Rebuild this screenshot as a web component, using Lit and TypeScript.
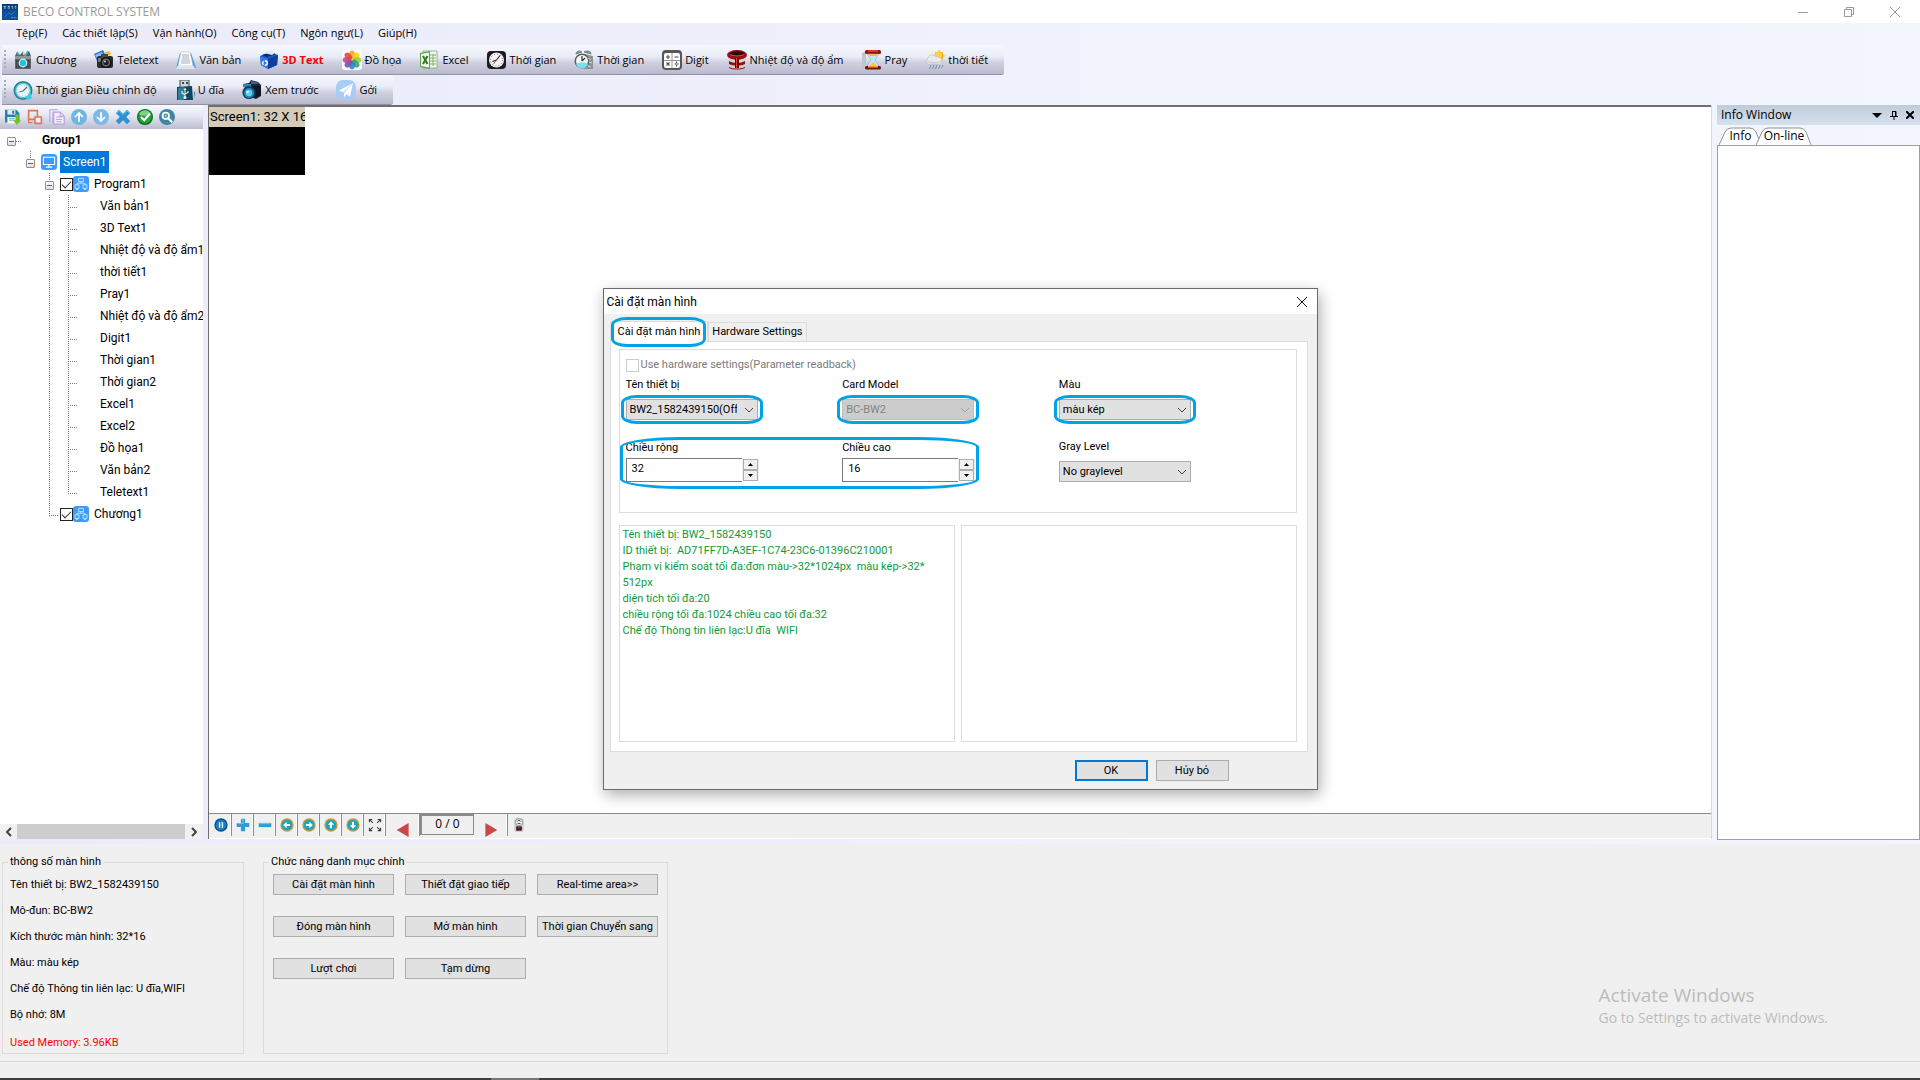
import { LitElement, html, css, svg, nothing, TemplateResult } from "lit";
import { customElement } from "lit/decorators.js";
import { classMap } from "lit/directives/class-map.js";

type Icon = TemplateResult;

const icon = (size: number, body: unknown): Icon =>
  html`<svg width=${size} height=${size} viewBox="0 0 20 20" aria-hidden="true">${body}</svg>`;

const petals = ["#f5a623", "#f8d21c", "#9ccc3c", "#2fa866", "#2f86c9", "#6a55b5", "#b7479a", "#e8453c"];

const art = {
  app: svg`<rect width="20" height="20" fill="#0a4f9c"/><rect width="20" height="7" fill="#073a78"/><path d="M2 3h3M2 5h3M7 3h3M7 5h3M12 3h2M12 5h2M16 3h2M16 5h2" stroke="#dce9f7" stroke-width="1"/><path d="M3 17l5-6 4 2 5-4" stroke="#2f86d6" fill="none"/><path d="M11 17h7" stroke="#b6d3ee" stroke-dasharray="1 1"/>`,
  program: svg`<path d="M2 6l2-4 3 3 3-4 2 4 4-4 2 5z" fill="#58626c"/><path d="M4 2l2 3M15 1l-3 5" stroke="#3bb6d8" stroke-width="1.6"/><path d="M10 1l1 4" stroke="#e8d9a6" stroke-width="1.6"/><rect x="2" y="6" width="16" height="13" rx="1" fill="#5f6468"/><rect x="2" y="6" width="16" height="3" fill="#90979c"/><rect x="3" y="10" width="14" height="8" fill="#494e52"/><circle cx="10" cy="13" r="4.4" fill="#d8eff4"/><circle cx="10" cy="13" r="3.2" fill="#22c4dd"/>`,
  camera: svg`<path d="M0 4l9-4 3 6-9 5z" fill="#2a6fd0"/><path d="M1 5l7-3 1 3-6 3z" fill="#8cc0f5"/><path d="M11 2l5-1 1 4-5 1z" fill="#efc23a"/><rect x="3" y="6" width="16" height="12" rx="2" fill="#2b2b2d"/><rect x="7" y="4" width="7" height="4" fill="#46474b"/><rect x="4" y="8" width="3" height="4" fill="#77797f"/><circle cx="12" cy="12.500" r="5.500" fill="#111"/><circle cx="12" cy="12.500" r="4" fill="#6a6d74"/><circle cx="12" cy="12.500" r="2.600" fill="#1c1d20"/><circle cx="11" cy="11.500" r="1" fill="#c8d0da"/>`,
  text: svg`<path d="M4 3h11l5 15H0z" fill="#3f9de0"/><path d="M5 2h9l3 14H2z" fill="#fdfdfd" stroke="#b8c3cf" stroke-width=".6"/><path d="M6 5h7M6 7h7M5.500 9h8M5 11h9M5 13h9" stroke="#9aa6b4" stroke-width=".9"/><path d="M1 16h17l1 3H0z" fill="#dfe5ec"/>`,
  box3d: svg`<path d="M1 6l10-4 8 3-1 10-9 4-7-4z" fill="#1857c2"/><path d="M1 6l8 3v10l-7-4z" fill="#2d7be6"/><path d="M9 9l10-4-1 10-9 4z" fill="#0f3f9e"/><path d="M3 5l9-3 5 2-9 3z" fill="#0a2a6e"/><path d="M5 3l6-3 5 3-3 2-4-1z" fill="#dfe9f6"/><circle cx="6" cy="13" r="2.300" fill="none" stroke="#fff" stroke-width="1.400" stroke-dasharray="3.500 1.300"/>`,
  flower: svg`<rect width="20" height="20" rx="3" fill="#fafafa"/>${petals.map(
    (c, i) => svg`<ellipse cx="10" cy="5" rx="3" ry="4.400" fill=${c} fill-opacity=".9" transform="rotate(${i * 45} 10 10)"/>`
  )}`,
  excel: svg`<path d="M4 1h14v17H4z" fill="#f4f8f2" stroke="#7da67b" stroke-width=".8"/><path d="M11 5h6M11 8h6M11 11h6M11 14h6M14 4v12" stroke="#7fb36f" stroke-width="1"/><path d="M1 3l10-2v18L1 17z" fill="#5aa63f"/><path d="M2 4l8-1.500v15L2 16z" fill="#f1f8ee"/><path d="M4 6l4.500 8M8.500 6L4 14" stroke="#2c7c2b" stroke-width="2"/>`,
  clockDark: svg`<rect x="0" y="1" width="19" height="18" rx="4" fill="#1c1c1e"/><circle cx="9.500" cy="10" r="7.500" fill="#f6f6f6"/><path d="M9.500 10L13 5.500M9.500 10l-4 1.500" stroke="#222" stroke-width="1.100"/><path d="M9.500 10l-3 4" stroke="#d22" stroke-width=".8"/><circle cx="9.500" cy="10" r="6" fill="none" stroke="#444" stroke-width="1" stroke-dasharray=".8 2.340"/>`,
  alarm: svg`<path d="M11 4l8 2v13H9z" fill="#8b9396"/><path d="M2 4c0-3 4-4 6-2zM10 2c3-2 7-1 7 2z" fill="#8e979a" stroke="#5d6669" stroke-width=".7"/><circle cx="8" cy="11" r="7.500" fill="#59605f"/><circle cx="8" cy="11" r="6" fill="#f5f8f7"/><path d="M2 14a6.200 6 0 0 0 12 0c-3-2-8-2-12 0z" fill="#7fdcec"/><path d="M8 11V6M8 11l3-3" stroke="#2d3434" stroke-width="1.200"/><path d="M14 8l3 2M15 12l3 1M14 16l3 1" stroke="#d7dcdd" stroke-width="1"/>`,
  digit: svg`<rect x="0" y="0" width="20" height="20" rx="4" fill="#565759"/><rect x="2" y="3" width="16" height="15" rx="2" fill="#fff"/><path d="M10 3v15M2 10.500h16" stroke="#8a8a8c" stroke-width=".9"/><path d="M6 5v4M4 7h4M12.500 7h4M4.500 12.500l3 3M7.500 12.500l-3 3M12.500 14h4" stroke="#4a4a4c" stroke-width="1.100"/><circle cx="14.500" cy="12.200" r=".8" fill="#4a4a4c"/><circle cx="14.500" cy="15.800" r=".8" fill="#4a4a4c"/>`,
  thermo: svg`<ellipse cx="10" cy="5" rx="10" ry="5" fill="#a30d14"/><ellipse cx="10" cy="4" rx="7.500" ry="2.800" fill="#2a0507"/><path d="M3 4.500c3 2 11 2 14 0" stroke="#e45a58" fill="none"/><path d="M1 8c5 3 13 3 18 0l-1 5c-4 2-12 2-16 0z" fill="#d6d3d2"/><path d="M2 11c4 2.500 12 2.500 16 0v7c-5 2-11 2-16 0z" fill="#8c1014"/><path d="M2 14c4 2 12 2 16 0v3c-5 2-11 2-16 0z" fill="#cfcccb"/><rect x="8" y="8" width="4" height="10" fill="#5c0508"/><rect x="9" y="8" width="1" height="10" fill="#e33"/>`,
  hourglass: svg`<path d="M0 3l4-2v17l-4 2z" fill="#bfc7cd"/><rect x="3" y="0" width="16" height="4" rx="1.500" fill="#8f1216"/><rect x="6" y="0" width="10" height="2" fill="#d63a30"/><path d="M5 4h12l-4 6 4 6H5l4-6z" fill="#c7e6f5" stroke="#7eb5d0" stroke-width=".6"/><path d="M6 4h10l-2 2H8z" fill="#f2b73c"/><path d="M11 12l4 4H7z" fill="#f6c948"/><rect x="3" y="16" width="16" height="3.500" rx="1.500" fill="#7d1013"/><rect x="6" y="16" width="10" height="1.500" fill="#e8a33a"/>`,
  weather: svg`<path d="M14 0v12M8.500 6h11.500M10 2l8 8M18 2l-8 8" stroke="#f7c544" stroke-width="1"/><circle cx="14" cy="6" r="4.600" fill="#f6a821"/><circle cx="13.500" cy="5.500" r="3.400" fill="#fdd24c"/><path d="M3 14a3.500 3.500 0 0 1 0-6c1-4 7-4 8-1 4-1 7 2 6 5 0 1-1 2-2 2z" fill="#e7e9ea" stroke="#b3b8bb" stroke-width=".6"/><path d="M2 11c3 2 11 2 15 0" stroke="#c4c9cc" fill="none"/><path d="M6 15l-1.500 4M9 15l-1.500 4M12 15l-1.500 4M15 15l-1.500 4M18 15l-1.500 3" stroke="#6f8fb8" stroke-width="1"/>`,
  clockTeal: svg`<circle cx="10" cy="10.500" r="9.500" fill="#1f8193"/><circle cx="10" cy="10.500" r="8" fill="#5cc0cd"/><circle cx="10" cy="10.500" r="6.600" fill="#eef8fa"/><path d="M10 11l4-4M10 11l-3.500 1" stroke="#3a7f90" stroke-width="1.200"/><path d="M12 17c3-1 5-3 5-6l2 7-4 2z" fill="#38cfe0"/><circle cx="10" cy="10.500" r="5.500" fill="none" stroke="#7fb9c4" stroke-dasharray=".7 2.180"/>`,
  usb: svg`<path d="M5 0h9v8H5z" fill="#cfd8dd" stroke="#3b4a54" stroke-width="1"/><path d="M7 2h2v2H7zM11 2h2v2h-2z" fill="#3b4a54"/><path d="M2 7l15-1 1 14H2z" fill="#12455c"/><path d="M3 8l6-1v13H3z" fill="#2c7f9d"/><path d="M10 9v9M10 15l-3-2v-2M10 14l3-1.500V11" stroke="#e9f7fb" stroke-width="1.100" fill="none"/><circle cx="10" cy="17.500" r="1.500" fill="#e9f7fb"/><path d="M8.500 10l1.500-2.500 1.500 2.500z" fill="#e9f7fb"/><path d="M19 13l1-2v7z" fill="#2b6cb0"/>`,
  photo: svg`<path d="M1 4l6-1 2-3 7 2 3 3v11l-5 3-6-2z" fill="#17283a"/><path d="M9 1l6 1 1 2-7 0z" fill="#40627f"/><path d="M10 6h9v9l-6 3z" fill="#0d1824"/><path d="M1 4h8v3H1z" fill="#2f84b8"/><circle cx="7" cy="12.500" r="6.600" fill="#1b3a52"/><circle cx="7" cy="13" r="5" fill="#2189bb"/><circle cx="7" cy="13" r="3.200" fill="#5ad0ef"/><circle cx="5.500" cy="12" r="1.300" fill="#e6fbff"/>`,
  send: svg`<rect x="0" y="0" width="20" height="20" rx="7" fill="#a9cbf7"/><path d="M17 3L3 10.500l4 1.800zM17 3L8 13v4l2.500-2.700L14 16.500z" fill="#fff"/><path d="M17 3L7 12.300l1 .7z" fill="#cfe2fb"/>`,
  save: svg`<path d="M0 1h14l4 4v12H0z" fill="#2382ad"/><rect x="3" y="1" width="10" height="6" fill="#d8eef5"/><rect x="9" y="2" width="2.500" height="4" fill="#2382ad"/><rect x="3" y="10" width="12" height="8" fill="#f3fafc"/><path d="M5 12h7M5 14h7" stroke="#4ca4c4"/><path d="M13 7h4v7h3l-5 6-5-6h3z" fill="#7cc21c"/>`,
  frames: svg`<path d="M2 2h11v11H2z" fill="none" stroke="#e0754f" stroke-width="2"/><path d="M10 10h8v8h-8z" fill="#f4f4fb" stroke="#e0754f" stroke-width="2"/><path d="M2 13v4h5" fill="none" stroke="#e0754f" stroke-width="1.500"/>`,
  copy: svg`<path d="M1 16V1h10M5 17V4h3" fill="none" stroke="#b9a0df" stroke-width="1.400"/><path d="M6 4h8l5 5v10H6z" fill="#f3effb" stroke="#b9a0df" stroke-width="1.500"/><path d="M14 4v5h5M9 10h7M9 13h7M9 16h7" fill="none" stroke="#b9a0df" stroke-width="1.300"/>`,
  up: svg`<circle cx="10" cy="10" r="10" fill="#6eb7e4"/><path d="M10 16V5M5 10l5-5 5 5" fill="none" stroke="#fff" stroke-width="2.200"/>`,
  down: svg`<circle cx="10" cy="10" r="10" fill="#7cb9e6"/><path d="M10 4v11M5 10l5 5 5-5" fill="none" stroke="#fff" stroke-width="2.200"/>`,
  cross: svg`<path d="M1 5l4-4 5 5 5-5 4 4-5 5 5 5-4 4-5-5-5 5-4-4 5-5z" fill="#2b93d2"/><path d="M2 5l3-3 5 5 5-5 3 3" fill="none" stroke="#8fcbf0"/>`,
  check: svg`<circle cx="10" cy="10" r="10" fill="#0d6b1c"/><circle cx="10" cy="9.500" r="8.500" fill="#26a038"/><path d="M2.500 7a8 8 0 0 1 15 0c-4 2-11 2-15 0z" fill="#7fcf87"/><path d="M5 10l4 4 7-8" fill="none" stroke="#fff" stroke-width="2.600"/>`,
  find: svg`<circle cx="10" cy="10" r="10" fill="#3f86a6"/><circle cx="8.500" cy="8.500" r="4" fill="none" stroke="#fff" stroke-width="2.200"/><path d="M11.500 11.500l5 5" stroke="#fff" stroke-width="2.600"/><circle cx="8.500" cy="8.500" r="1.200" fill="#cde4ee"/>`,
  monitor: svg`<rect width="20" height="20" rx="4" fill="#3b9bff"/><path d="M3 4h14v9H3z" fill="none" stroke="#fff" stroke-width="1.300"/><path d="M10 13v3M6 16.500h8" stroke="#fff" stroke-width="1.600"/>`,
  nodes: svg`<rect width="20" height="20" rx="4" fill="#3b9bff"/><path d="M7 3h6v4H7zM2.500 11h5v4.500h-5zM12.500 11h5v4.500h-5zM10 7v2M5 11V9h10v2" fill="none" stroke="#d9ecff" stroke-width="1"/><path d="M5 15.500v2M15 15.500v2M4 17h2M14 17h2" stroke="#d9ecff"/>`,
  pause: svg`<circle cx="10" cy="10" r="9.500" fill="#0b4f86"/><circle cx="10" cy="10" r="7.500" fill="#1c80c2"/><path d="M8 6v8M12 6v8" stroke="#e9f7ff" stroke-width="2"/>`,
  plus: svg`<path d="M7 1h6v6h6v6h-6v6H7v-6H1V7h6z" fill="#2f9bdc"/><path d="M8 2h2v6H2" fill="none" stroke="#9fd6f5"/>`,
  minus: svg`<path d="M1 7h18v6H1z" fill="#2f9bdc"/><path d="M2 8h16" stroke="#9fd6f5"/>`,
  play: svg`<path d="M18 0v20L1 10z" fill="#c9484a"/>`,
  expand: svg`<path d="M2 6V2h4M14 2h4v4M18 14v4h-4M6 18H2v-4M2 2l5 5M18 2l-5 5M18 18l-5-5M2 18l5-5" fill="none" stroke="#3b3b3b" stroke-width="1.500"/>`,
  device: svg`<rect x="3" y="0" width="14" height="20" rx="4" fill="#cbd1d6"/><circle cx="10" cy="6" r="5" fill="#f2f4f5" stroke="#6f777d"/><path d="M8 5l1-1.500h2l1 1.500M8 8h4" stroke="#222" stroke-width="1.200" fill="none"/><rect x="6" y="12" width="8" height="6" fill="#2b1512"/><rect x="8" y="13" width="4" height="3" fill="#8c2a20"/>`,
};

const ringArrow = (deg: number) => svg`<circle cx="10" cy="10" r="9.500" fill="#c69a3c"/><circle cx="10" cy="10" r="7.500" fill="#17a6bd"/><path transform="rotate(${deg} 10 10)" d="M4.500 10l5-4.500v3h5v3h-5v3z" fill="#fff"/>`;

const sysButton = (label: string, path: string, size = 10) =>
  html`<button class="sys" aria-label=${label}>
    <svg width=${size} height=${size} viewBox="0 0 10 10" aria-hidden="true"><path d=${path} fill="none" stroke="currentColor" /></svg>
  </button>`;

const chevron = html`<svg class="chevron" width="10" height="6" viewBox="0 0 10 6" aria-hidden="true"><path d="M1 1l4 4 4-4" fill="none" stroke="currentColor" stroke-width="1" /></svg>`;

@customElement("screen-dialog")
export class ScreenDialog extends LitElement {
  static styles = css`
    :host {
      display: block;
      font: 11px/16px var(--dialog-font);
      color: #000;
    }
    * {
      box-sizing: border-box;
    }
    button,
    select,
    input {
      font: inherit;
      color: inherit;
      margin: 0;
    }
    .frame {
      width: 715px;
      background: #f0f0f0;
      border: 1px solid #6b6b6b;
      box-shadow: 2px 5px 14px rgba(0, 0, 0, 0.32);
    }
    .title {
      display: flex;
      align-items: center;
      justify-content: space-between;
      height: 25px;
      padding: 0 9px 0 3px;
      background: #fff;
      font-size: 12px;
    }
    h2 {
      margin: 0;
      font: inherit;
    }
    .close {
      display: flex;
      padding: 0;
      border: 0;
      background: none;
    }
    .tabs {
      display: flex;
      align-items: flex-end;
      height: 27px;
      padding-left: 6px;
    }
    .tab {
      position: relative;
      height: 19px;
      padding: 0 3px;
      border: 1px solid #dcdcdc;
      border-bottom: 0;
      background: #f0f0f0;
    }
    .tab.active {
      height: 21px;
      padding: 0 7px 1px;
      background: #fff;
      margin-bottom: -1px;
    }
    .page {
      margin: 0 9px 0 6px;
      padding: 7px 10px 9px 8px;
      border: 1px solid #dcdcdc;
      background: #fff;
    }
    .settings {
      height: 164px;
      padding: 7px 20px 0 6px;
      border: 1px solid #dcdcdc;
    }
    .readback {
      display: flex;
      align-items: center;
      gap: 2px;
      color: #7b7b7b;
    }
    .readback input {
      appearance: none;
      width: 13px;
      height: 13px;
      border: 1px solid #cccccc;
      background: #fff;
    }
    .grid {
      display: grid;
      grid-template-columns: repeat(3, 1fr);
      row-gap: 18px;
      padding-top: 4px;
    }
    .field {
      display: flex;
      flex-direction: column;
      align-items: flex-start;
      gap: 6px;
      padding-bottom: 1px;
    }
    .sizes {
      position: relative;
      grid-column: span 2;
      display: grid;
      grid-template-columns: repeat(2, 1fr);
      padding-top: 1px;
    }
    .sizes .field {
      gap: 2px;
    }
    .pick {
      position: relative;
      display: flex;
      align-items: center;
    }
    select {
      appearance: none;
      width: 132px;
      height: 21px;
      padding: 0 20px 0 3px;
      border: 1px solid #adadad;
      border-radius: 0;
      background: #e1e1e1;
    }
    select:disabled {
      opacity: 1;
      color: #838383;
      background: #cccccc;
      border-color: #bfbfbf;
    }
    .chevron {
      position: absolute;
      right: 4px;
      color: #444;
      pointer-events: none;
    }
    select:disabled + .chevron {
      color: #a3a3a3;
    }
    .marked::after {
      content: "";
      position: absolute;
      inset: -4px -5px;
      border: 3px solid #00a2e8;
      border-radius: 16px / 8px;
      pointer-events: none;
    }
    .tab.marked::after {
      inset: -5px 1px -5px 0;
    }
    .sizes.marked::after {
      inset: -2px 80px -6px -6px;
      border-radius: 60px / 10px;
    }
    .spin {
      display: flex;
      align-items: center;
    }
    .spin input {
      width: 116px;
      height: 24px;
      padding: 0 5px 3px;
      border: 1px solid #7a7a7a;
      border-right: 0;
      border-radius: 0;
      background: #fff;
    }
    .steps {
      display: flex;
      flex-direction: column;
      padding: 0 1px;
      background: #f0f0f0;
    }
    .steps button {
      display: flex;
      align-items: center;
      justify-content: center;
      width: 15px;
      height: 11px;
      padding: 0;
      border: 1px solid #adadad;
      background: #f0f0f0;
    }
    .panes {
      display: grid;
      grid-template-columns: 1fr 1fr;
      gap: 6px;
      margin-top: 12px;
    }
    .pane {
      height: 217px;
      padding: 1px 3px;
      border: 1px solid #dcdcdc;
      color: #12983c;
      white-space: pre;
      overflow: hidden;
    }
    .actions {
      display: flex;
      justify-content: flex-end;
      gap: 8px;
      padding: 8px 88px 8px 0;
    }
    .actions button {
      width: 73px;
      height: 21px;
      padding: 0;
      border: 1px solid #adadad;
      background: #e1e1e1;
    }
    .actions .primary {
      border: 2px solid #0078d7;
    }
  `;

  private log = [
    "Tên thiết bị: BW2_1582439150",
    "ID thiết bị:  AD71FF7D-A3EF-1C74-23C6-01396C210001",
    "Phạm vi kiểm soát tối đa:đơn màu->32*1024px  màu kép->32*",
    "512px",
    "diện tích tối đa:20",
    "chiều rộng tối đa:1024 chiều cao tối đa:32",
    "Chế độ Thông tin liên lạc:U đĩa  WIFI",
  ];

  private pick(id: string, label: string, value: string, marked: boolean, disabled = false) {
    return html`<div class="field">
      <label for=${id}>${label}</label>
      <div class=${classMap({ pick: true, marked })}>
        <select id=${id} ?disabled=${disabled}>
          <option>${value}</option>
        </select>
        ${chevron}
      </div>
    </div>`;
  }

  private spin(id: string, label: string, value: string) {
    const step = (name: string, d: string) =>
      html`<button aria-label="${label} ${name}">
        <svg width="5" height="3" viewBox="0 0 5 3" aria-hidden="true"><path d=${d} /></svg>
      </button>`;
    return html`<div class="field">
      <label for=${id}>${label}</label>
      <div class="spin">
        <input id=${id} type="text" .value=${value} />
        <div class="steps">${step("+", "M0 3h5L2.500 0z")}${step("−", "M0 0h5L2.500 3z")}</div>
      </div>
    </div>`;
  }

  render() {
    return html`<section class="frame" role="dialog" aria-labelledby="dialog-title">
      <header class="title">
        <h2 id="dialog-title">Cài đặt màn hình</h2>
        <button class="close" aria-label="Close">
          <svg width="12" height="12" viewBox="0 0 12 12" aria-hidden="true"><path d="M1 1l10 10M11 1L1 11" stroke="#111" /></svg>
        </button>
      </header>
      <div class="tabs" role="tablist">
        <button class="tab active marked" role="tab" aria-selected="true">Cài đặt màn hình</button>
        <button class="tab" role="tab">Hardware Settings</button>
      </div>
      <div class="page">
        <div class="settings">
          <div class="readback">
            <input id="readback" type="checkbox" disabled /><label for="readback">Use hardware settings(Parameter readback)</label>
          </div>
          <div class="grid">
            ${this.pick("device", "Tên thiết bị", "BW2_1582439150(Off", true)}
            ${this.pick("card", "Card Model", "BC-BW2", true, true)}
            ${this.pick("color", "Màu", "màu kép", true)}
            <div class="sizes marked">${this.spin("width", "Chiều rộng", "32")}${this.spin("height", "Chiều cao", "16")}</div>
            ${this.pick("gray", "Gray Level", "No graylevel", false)}
          </div>
        </div>
        <div class="panes">
          <div class="pane">${this.log.join("\n")}</div>
          <div class="pane"></div>
        </div>
      </div>
      <footer class="actions">
        <button class="primary">OK</button>
        <button>Hủy bỏ</button>
      </footer>
    </section>`;
  }
}

interface TreeRow {
  label: string;
  kind: "group" | "screen" | "program" | "item" | "last";
  leaf?: boolean;
}

@customElement("program-tree")
export class ProgramTree extends LitElement {
  static styles = css`
    :host {
      display: block;
      overflow: hidden;
      background: #fff;
      font: 12px/22px var(--tree-font);
      color: #000;
    }
    ul {
      list-style: none;
      margin: 0;
      padding: 0 0 0 2px;
    }
    li {
      display: flex;
      align-items: center;
      height: 22px;
      white-space: nowrap;
    }
    .cell {
      display: grid;
      place-items: center;
      flex: none;
      width: 19px;
      height: 22px;
      background-repeat: no-repeat;
    }
    .cell.v,
    .cell.top,
    .cell.end {
      background-image: repeating-linear-gradient(to bottom, #777 0 1px, transparent 1px 2px);
      background-size: 1px 100%;
      background-position: 9px 0;
    }
    .cell.top {
      background-size: 1px 8px;
    }
    .cell.tee,
    .cell.end {
      background-image: repeating-linear-gradient(to bottom, #777 0 1px, transparent 1px 2px),
        repeating-linear-gradient(to right, #777 0 1px, transparent 1px 2px);
      background-size: 1px 100%, 10px 1px;
      background-position: 9px 0, 9px 12px;
    }
    .cell.end {
      background-size: 1px 12px, 10px 1px;
    }
    .cell.h {
      background-image: repeating-linear-gradient(to right, #777 0 1px, transparent 1px 2px);
      background-size: 5px 1px;
      background-position: 14px 12px;
    }
    .toggle {
      width: 9px;
      height: 9px;
      margin-top: 2px;
      padding: 0;
      border: 1px solid #919191;
      border-radius: 1px;
      background: linear-gradient(#4b63a7, #4b63a7) center / 5px 1px no-repeat, linear-gradient(#fff, #ddd);
    }
    input {
      appearance: none;
      display: grid;
      width: 13px;
      height: 13px;
      margin: 0 0 0 1px;
      border: 1px solid #222;
      background: #fff;
    }
    input:checked::before {
      content: "";
      width: 8px;
      height: 4px;
      margin: 2px 0 0 1px;
      border: solid #333;
      border-width: 0 0 1px 1px;
      transform: rotate(-45deg);
    }
    svg {
      flex: none;
    }
    .name {
      padding: 0 3px;
      margin-left: 2px;
    }
    .group .name {
      margin-left: 18px;
      font-weight: 700;
    }
    .screen svg {
      margin-left: 1px;
    }
    .screen .name {
      margin-left: 3px;
      color: #fff;
      background: #0078d7;
    }
    .item .name {
      margin-left: 19px;
      padding-right: 0;
    }
  `;

  private rows: TreeRow[] = [
    { label: "Group1", kind: "group" },
    { label: "Screen1", kind: "screen" },
    { label: "Program1", kind: "program" },
    ...["Văn bản1", "3D Text1", "Nhiệt độ và độ ẩm1", "thời tiết1", "Pray1", "Nhiệt độ và độ ẩm2", "Digit1", "Thời gian1", "Thời gian2", "Excel1", "Excel2", "Đồ họa1", "Văn bản2"].map(
      (label): TreeRow => ({ label, kind: "item" })
    ),
    { label: "Teletext1", kind: "item", leaf: true },
    { label: "Chương1", kind: "last" },
  ];

  private cells(row: TreeRow) {
    const cell = (cls: string, body: unknown = nothing) => html`<span class="cell ${cls}">${body}</span>`;
    const toggle = html`<button class="toggle" aria-label="Collapse ${row.label}"></button>`;
    switch (row.kind) {
      case "group":
        return cell("h", toggle);
      case "screen":
        return [cell(""), cell("top", toggle)];
      case "program":
        return [cell(""), cell(""), cell("top", toggle)];
      case "item":
        return [cell(""), cell(""), cell("v"), cell(row.leaf ? "end" : "tee")];
      default:
        return [cell(""), cell(""), cell("end")];
    }
  }

  render() {
    return html`<ul>
      ${this.rows.map((row, i) => {
        const boxed = row.kind === "program" || row.kind === "last";
        const id = `row-${i}`;
        return html`<li class=${row.kind}>
          ${this.cells(row)}
          ${boxed ? html`<input id=${id} type="checkbox" checked />` : nothing}
          ${row.kind === "screen" ? icon(16, art.monitor) : boxed ? icon(16, art.nodes) : nothing}
          ${boxed ? html`<label class="name" for=${id}>${row.label}</label>` : html`<span class="name">${row.label}</span>`}
        </li>`;
      })}
    </ul>`;
  }
}

@customElement("app-root")
export class AppRoot extends LitElement {
  static styles = css`
    :host {
      --ui-font: "Open Sans", "Noto Sans", sans-serif;
      --tree-font: Roboto, "Noto Sans", sans-serif;
      --dialog-font: Roboto, "Noto Sans", sans-serif;
      position: relative;
      display: flex;
      flex-direction: column;
      height: 100vh;
      overflow: hidden;
      background: linear-gradient(to right, #ebebfa, #f3f6fd);
      font: 12px/16px var(--ui-font);
      color: #000;
    }
    * {
      box-sizing: border-box;
    }
    button {
      font: inherit;
      color: inherit;
      margin: 0;
      padding: 0;
      border: 0;
      background: none;
      white-space: nowrap;
    }
    .titlebar {
      display: flex;
      align-items: center;
      gap: 5px;
      height: 23px;
      padding: 0 2px;
      background: #fff;
      color: #999;
    }
    h1 {
      flex: 1;
      margin: 0;
      font: inherit;
      font-weight: 400;
    }
    .sys {
      display: grid;
      place-items: center;
      width: 46px;
      height: 20px;
      margin-left: -5px;
    }
    .menu {
      display: flex;
      gap: 15px;
      height: 22px;
      padding-left: 16px;
      font-size: 11px;
    }
    .menu button {
      height: 20px;
    }
    .bar {
      display: flex;
      align-items: center;
      align-self: flex-start;
      gap: 18px;
      height: 30px;
      margin-left: 2px;
      padding: 0 16px 0 11px;
      border-bottom: 1px solid #9091a6;
      border-radius: 0 3px 3px 0;
      background: linear-gradient(#f6f8fe, #e9ecf7 40%, #cfd1e0 60%, #b9bacd);
      font-size: 11px;
    }
    .bar::before {
      content: "";
      width: 2px;
      height: 20px;
      margin: 0 -18px 0 -9px;
      background: repeating-linear-gradient(#a9a9b3 0 2px, transparent 2px 4px);
      transform: none;
    }
    .tool {
      display: flex;
      align-items: center;
      gap: 3px;
    }
    .tool:first-child {
      margin-left: 7px;
    }
    .tool.hot {
      color: #f00;
      font-weight: 700;
    }
    .work {
      flex: 1;
      display: grid;
      grid-template-columns: 203px 1fr 203px;
      column-gap: 5px;
      min-height: 0;
    }
    .side {
      display: flex;
      flex-direction: column;
      min-width: 0;
      padding-bottom: 2px;
    }
    .minibar {
      display: flex;
      align-items: center;
      gap: 6px;
      flex: none;
      height: 24px;
      padding-left: 5px;
      background: linear-gradient(#f8f9fe, #e4e6f2 45%, #bbbccf);
    }
    .minibar button,
    .player button {
      display: flex;
    }
    program-tree {
      flex: 1;
    }
    .scroll {
      display: flex;
      align-items: stretch;
      height: 15px;
      background: #f0f0f0;
    }
    .scroll button {
      display: grid;
      place-items: center;
      width: 17px;
    }
    .thumb {
      width: 168px;
      background: #cdcdcd;
    }
    .stage {
      display: flex;
      flex-direction: column;
      min-width: 0;
      margin-bottom: 2px;
      border-left: 1px solid #6f6f6f;
      border-right: 1px solid #d9d9dd;
    }
    .canvas {
      flex: 1;
      padding: 0;
      border-top: 2px solid #6f6f6f;
      background: #fff;
    }
    .preview {
      width: 96px;
      height: 68px;
      overflow: hidden;
      background: #000;
      font: 13px/20px var(--dialog-font);
    }
    .caption {
      padding-left: 1px;
      background: #d4cbb8;
      white-space: nowrap;
    }
    .player {
      display: flex;
      align-items: stretch;
      height: 26px;
      padding: 0 0 2px 1px;
      border-top: 1px solid #8b8b8b;
      border-bottom: 1px solid #fff;
      background: #f0f0f0;
    }
    .player button {
      align-items: center;
      justify-content: center;
      width: 22px;
      border-right: 1px solid #8b8b8b;
      box-shadow: inset -1px 0 #fff;
    }
    .player .wide {
      width: 34px;
      padding-top: 9px;
    }
    .player .last {
      border: 0;
      box-shadow: none;
    }
    .player output {
      width: 54px;
      height: 21px;
      border: 1px solid #8b8b8b;
      border-width: 2px 1px 1px 2px;
      text-align: center;
    }
    .flip {
      transform: rotate(180deg);
    }
    .info {
      display: flex;
      flex-direction: column;
      min-width: 0;
    }
    .infohead {
      display: flex;
      align-items: center;
      gap: 8px;
      height: 20px;
      padding: 0 6px 0 4px;
      background: linear-gradient(#bfcbd9, #d5e1ee);
    }
    h2 {
      flex: 1;
      margin: 0;
      font: inherit;
    }
    .infohead button {
      display: flex;
    }
    .infotabs {
      display: flex;
      height: 20px;
      padding: 2px 0 0 2px;
    }
    .infotab {
      display: grid;
      place-items: center;
      margin-right: -6px;
    }
    .infotab > * {
      grid-area: 1 / 1;
    }
    .infobody {
      flex: 1;
      margin-bottom: 1px;
      border: 1px solid #9d9da8;
      background: #fff;
    }
    .bottom {
      display: flex;
      align-items: flex-start;
      gap: 19px;
      height: 218px;
      margin-top: 3px;
      padding: 10px 2px 0;
      border-bottom: 1px solid #d8d8d8;
      background: #f0f0f0;
      font: 11px/16px var(--dialog-font);
    }
    fieldset {
      min-width: 0;
      height: 200px;
      margin: 0;
      padding: 0;
      border: 1px solid #dcdcdc;
    }
    legend {
      margin-left: 5px;
      padding: 0 2px;
    }
    .params {
      width: 242px;
    }
    .params p {
      margin: 0 0 10px 7px;
    }
    .params p:first-of-type {
      margin-top: 7px;
    }
    .params .used {
      margin-top: 12px;
      color: #f00;
    }
    .commands {
      width: 405px;
    }
    .grid {
      display: grid;
      grid-template-columns: repeat(3, 121px);
      gap: 21px 11px;
      padding: 4px 9px;
    }
    .grid button {
      height: 21px;
      border: 1px solid #adadad;
      background: #e1e1e1;
    }
    .status {
      height: 16px;
      background: #f0f0f0;
    }
    .taskbar {
      height: 2px;
      padding-left: 491px;
      background: #3f3d3f;
    }
    .running {
      width: 48px;
      height: 2px;
      background: #777;
    }
    .activate {
      position: absolute;
      right: 92px;
      bottom: 52px;
      color: #bcbcbc;
      font-size: 14px;
      line-height: 20px;
    }
    .activate strong {
      display: block;
      font-size: 19px;
      font-weight: 400;
      line-height: 25px;
    }
    .overlay {
      position: absolute;
      inset: 0 0 2px;
      display: grid;
      place-items: center;
      pointer-events: none;
    }
    screen-dialog {
      pointer-events: auto;
    }
  `;

  private menus = ["Tệp(F)", "Các thiết lập(S)", "Vận hành(O)", "Công cụ(T)", "Ngôn ngư(L)", "Giúp(H)"];

  private tools: [string, unknown][] = [
    ["Chương", art.program],
    ["Teletext", art.camera],
    ["Văn bản", art.text],
    ["3D Text", art.box3d],
    ["Đồ họa", art.flower],
    ["Excel", art.excel],
    ["Thời gian", art.clockDark],
    ["Thời gian", art.alarm],
    ["Digit", art.digit],
    ["Nhiệt độ và độ ẩm", art.thermo],
    ["Pray", art.hourglass],
    ["thời tiết", art.weather],
  ];

  private actions: [string, unknown][] = [
    ["Thời gian Điều chỉnh độ", art.clockTeal],
    ["U đĩa", art.usb],
    ["Xem trước", art.photo],
    ["Gởi", art.send],
  ];

  private mini: [string, unknown][] = [
    ["Save", art.save],
    ["Frames", art.frames],
    ["Copy", art.copy],
    ["Up", art.up],
    ["Down", art.down],
    ["Delete", art.cross],
    ["Apply", art.check],
    ["Find", art.find],
  ];

  private playerTools: [string, unknown][] = [
    ["Pause", art.pause],
    ["Zoom in", art.plus],
    ["Zoom out", art.minus],
    ["Left", ringArrow(0)],
    ["Right", ringArrow(180)],
    ["Up", ringArrow(90)],
    ["Down", ringArrow(270)],
    ["Fit", art.expand],
  ];

  private params = ["Tên thiết bị: BW2_1582439150", "Mô-đun: BC-BW2", "Kích thước màn hình: 32*16", "Màu: màu kép", "Chế độ Thông tin liên lạc: U đĩa,WIFI", "Bộ nhớ: 8M"];

  private commands = ["Cài đặt màn hình", "Thiết đặt giao tiếp", "Real-time area>>", "Đóng màn hình", "Mở màn hình", "Thời gian Chuyển sang", "Lượt chơi", "Tạm dừng"];

  private bar(items: [string, unknown][]) {
    return html`<div class="bar" role="toolbar">
      ${items.map(
        ([label, body]) => html`<button class=${classMap({ tool: true, hot: label === "3D Text" })}>${icon(20, body)}${label}</button>`
      )}
    </div>`;
  }

  private infoTab(label: string, width: number) {
    return html`<button class="infotab">
      <svg width=${width} height="18" viewBox="0 0 ${width} 18" aria-hidden="true">
        <path d="M0 18L6 5Q8 1 12 1H${width - 12}Q${width - 8} 1 ${width - 6} 5L${width - 1} 18" fill="#fff" stroke="#8f8f98" />
      </svg>
      <span>${label}</span>
    </button>`;
  }

  render() {
    return html`
      <header class="titlebar">
        ${icon(16, art.app)}
        <h1>BECO CONTROL SYSTEM</h1>
        ${sysButton("Minimize", "M0 5.500h10")}
        ${sysButton("Restore", "M.5 2.500h7v7h-7zM2.500 2.500v-2h7v7h-2")}
        ${sysButton("Close", "M0 0l10 10M10 0L0 10")}
      </header>
      <nav class="menu">${this.menus.map((m) => html`<button>${m}</button>`)}</nav>
      ${this.bar(this.tools)} ${this.bar(this.actions)}
      <main class="work">
        <aside class="side">
          <div class="minibar">${this.mini.map(([label, body]) => html`<button aria-label=${label}>${icon(16, body)}</button>`)}</div>
          <program-tree></program-tree>
          <div class="scroll">
            <button aria-label="Scroll left"><svg width="6" height="10" viewBox="0 0 6 10"><path d="M5 1L1 5l4 4" fill="none" stroke="#444" stroke-width="2" /></svg></button>
            <div class="thumb"></div>
            <button aria-label="Scroll right"><svg width="6" height="10" viewBox="0 0 6 10"><path d="M1 1l4 4-4 4" fill="none" stroke="#444" stroke-width="2" /></svg></button>
          </div>
        </aside>
        <section class="stage">
          <div class="canvas">
            <div class="preview"><div class="caption">Screen1: 32 X 16</div></div>
          </div>
          <div class="player">
            ${this.playerTools.map(([label, body]) => html`<button aria-label=${label}>${icon(14, body)}</button>`)}
            <button class="wide" aria-label="Previous">${icon(14, art.play)}</button>
            <output>0 / 0</output>
            <button class="wide" aria-label="Next"><svg class="flip" width="14" height="14" viewBox="0 0 20 20">${art.play}</svg></button>
            <button class="last" aria-label="Device">${icon(14, art.device)}</button>
          </div>
        </section>
        <aside class="info">
          <div class="infohead">
            <h2>Info Window</h2>
            <button aria-label="Menu"><svg width="10" height="6" viewBox="0 0 10 6"><path d="M0 1h10L5 6z" /></svg></button>
            <button aria-label="Pin"><svg width="8" height="9" viewBox="0 0 8 9"><path d="M2 .5h4v4.500M2.500 0v5M0 5.500h8M4 5.500V9M5.500 0v5" fill="none" stroke="#000" /></svg></button>
            <button aria-label="Close"><svg width="8" height="8" viewBox="0 0 8 8"><path d="M0 0l8 8M8 0L0 8" stroke="#000" stroke-width="2" /></svg></button>
          </div>
          <div class="infotabs">${this.infoTab("Info", 43)}${this.infoTab("On-line", 56)}</div>
          <div class="infobody"></div>
        </aside>
      </main>
      <section class="bottom">
        <fieldset class="params">
          <legend>thông số màn hình</legend>
          ${this.params.map((p) => html`<p>${p}</p>`)}
          <p class="used">Used Memory: 3.96KB</p>
        </fieldset>
        <fieldset class="commands">
          <legend>Chức năng danh mục chính</legend>
          <div class="grid">${this.commands.map((c) => html`<button>${c}</button>`)}</div>
        </fieldset>
      </section>
      <div class="status"></div>
      <div class="taskbar"><div class="running"></div></div>
      <div class="activate"><strong>Activate Windows</strong>Go to Settings to activate Windows.</div>
      <div class="overlay"><screen-dialog></screen-dialog></div>
    `;
  }
}
